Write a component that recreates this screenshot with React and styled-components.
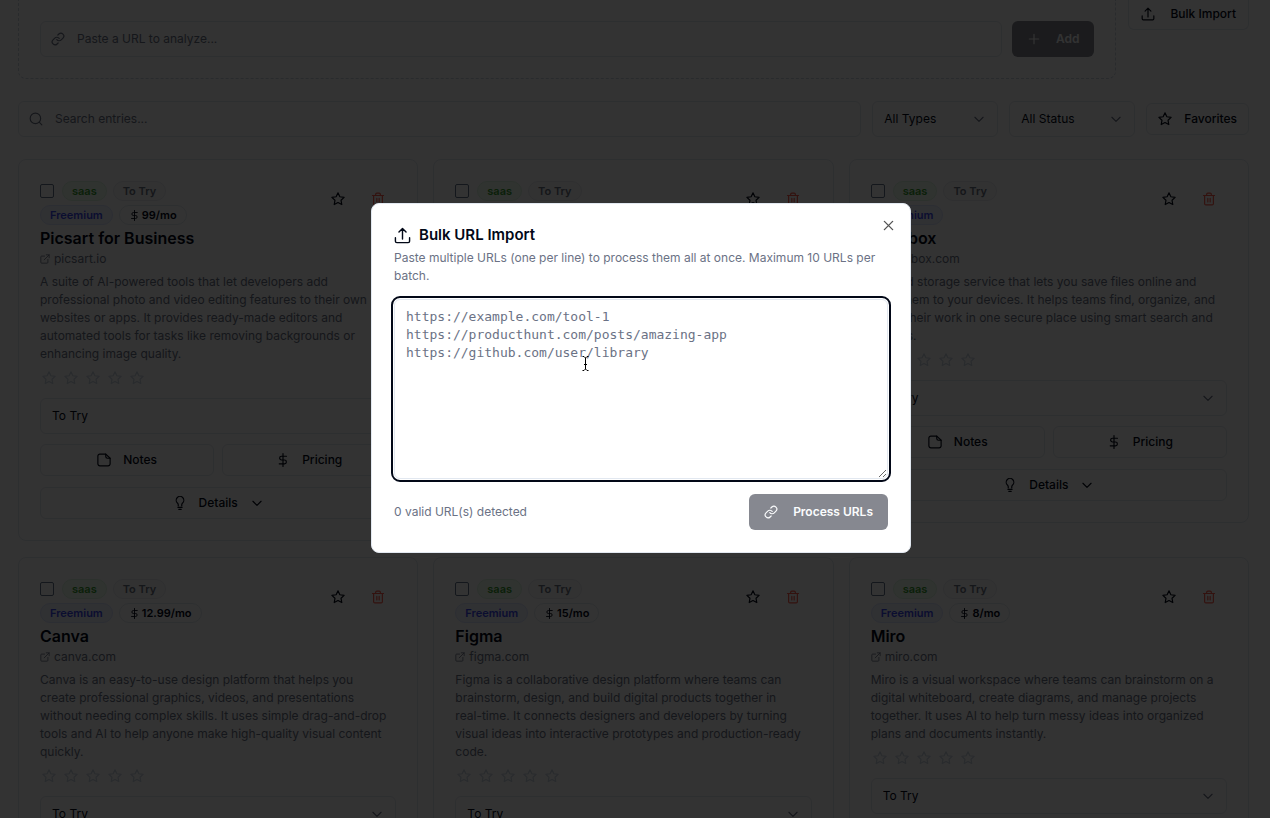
import React, { useState } from "react";
import styled, { createGlobalStyle } from "styled-components";

const entries = [
  {
    name: "Picsart for Business",
    site: "picsart.io",
    price: "99/mo",
    text: "A suite of AI-powered tools that let developers add\nprofessional photo and video editing features to their own\nwebsites or apps. It provides ready-made editors and\nautomated tools for tasks like removing backgrounds or\nenhancing image quality.",
  },
  {
    name: "Notion",
    site: "notion.so",
    price: "10/mo",
    text: "Notion is a connected workspace where teams can\nwrite, plan, and organize their work in one place.",
  },
  {
    name: "Dropbox",
    site: "dropbox.com",
    text: "A cloud storage service that lets you save files online and\nsync them to your devices. It helps teams find, organize, and\nshare their work in one secure place using smart search and\nAI tools.",
  },
  {
    name: "Canva",
    site: "canva.com",
    price: "12.99/mo",
    text: "Canva is an easy-to-use design platform that helps you\ncreate professional graphics, videos, and presentations\nwithout needing complex skills. It uses simple drag-and-drop\ntools and AI to help anyone make high-quality visual content\nquickly.",
  },
  {
    name: "Figma",
    site: "figma.com",
    price: "15/mo",
    text: "Figma is a collaborative design platform where teams can\nbrainstorm, design, and build digital products together in\nreal-time. It connects designers and developers by turning\nvisual ideas into interactive prototypes and production-ready\ncode.",
  },
  {
    name: "Miro",
    site: "miro.com",
    price: "8/mo",
    text: "Miro is a visual workspace where teams can brainstorm on a\ndigital whiteboard, create diagrams, and manage projects\ntogether. It uses AI to help turn messy ideas into organized\nplans and documents instantly.",
  },
];

const icons = {
  link: (
    <>
      <path d="M10 13a5 5 0 0 0 7.54.54l3-3a5 5 0 0 0-7.07-7.07l-1.72 1.71" />
      <path d="M14 11a5 5 0 0 0-7.54-.54l-3 3a5 5 0 0 0 7.07 7.07l1.71-1.71" />
    </>
  ),
  upload: (
    <>
      <path d="M2 15v5a2 2 0 0 0 2 2h16a2 2 0 0 0 2-2v-5" />
      <path d="M7 7l5-5 5 5M12 2v15" />
    </>
  ),
  plus: <path d="M4 12h16M12 4v16" />,
  search: (
    <>
      <circle cx="11" cy="11" r="9" />
      <path d="m22 22-4.5-4.5" />
    </>
  ),
  chevron: <path d="m5 9 7 7 7-7" />,
  star: (
    <path d="m12 1.500 3.200 6.600 7.300 1-5.300 5.100 1.300 7.300-6.500-3.500-6.500 3.500 1.300-7.300L1.500 9.100l7.300-1z" />
  ),
  trash: (
    <>
      <path d="M2.500 6h19M4.500 6v14a2 2 0 0 0 2 2h11a2 2 0 0 0 2-2V6" />
      <path d="M8 6V4a2 2 0 0 1 2-2h4a2 2 0 0 1 2 2v2M10 11v6M14 11v6" />
    </>
  ),
  external: (
    <>
      <path d="M19 13v7a2 2 0 0 1-2 2H4a2 2 0 0 1-2-2V7a2 2 0 0 1 2-2h7" />
      <path d="M15 2h7v7M10 14 22 2" />
    </>
  ),
  dollar: (
    <path d="M12 1v22M18 5.500H9.500a3.250 3.250 0 0 0 0 6.500h5a3.250 3.250 0 0 1 0 6.500H5.500" />
  ),
  note: (
    <>
      <path d="M15 2H5a3.500 3.500 0 0 0-3.500 3.500v13A3.500 3.500 0 0 0 5 22h14a3.500 3.500 0 0 0 3.500-3.500V9z" />
      <path d="M15 2v4a3 3 0 0 0 3 3h4.500" />
    </>
  ),
  bulb: (
    <>
      <path d="M9 17v-2c0-1.500-.9-2.300-1.600-3.300a6.500 6.500 0 1 1 9.200 0c-.7 1-1.600 1.800-1.600 3.300v2" />
      <path d="M8.500 19.500h7M10 23h4" />
    </>
  ),
  close: <path d="M3 3l18 18M21 3 3 21" />,
};

function Icon({ name, size = 14, stroke = 2 }) {
  return (
    <Svg
      width={size}
      height={size}
      viewBox="0 0 24 24"
      strokeWidth={stroke}
      aria-hidden="true"
    >
      {icons[name]}
    </Svg>
  );
}

function Dropdown({ label, options, wide }) {
  return (
    <SelectWrapper $wide={wide}>
      <select aria-label={label}>
        {options.map((option) => (
          <option key={option}>{option}</option>
        ))}
      </select>
      <Icon name="chevron" />
    </SelectWrapper>
  );
}

function EntryCard({ entry }) {
  return (
    <Card>
      <CardHeader>
        <Badges>
          <BadgeRow>
            <Checkbox type="checkbox" aria-label={`Select ${entry.name}`} />
            <Badge $kind="type">saas</Badge>
            <Badge $kind="status">To Try</Badge>
          </BadgeRow>
          <BadgeRow>
            <Badge $kind="plan">Freemium</Badge>
            {entry.price && (
              <Badge>
                <Icon name="dollar" size={11} />
                {entry.price}
              </Badge>
            )}
          </BadgeRow>
        </Badges>
        <IconButton aria-label="Favorite">
          <Icon name="star" />
        </IconButton>
        <IconButton aria-label="Delete" $danger>
          <Icon name="trash" />
        </IconButton>
      </CardHeader>
      <CardTitle>{entry.name}</CardTitle>
      <SiteLink href={`https://${entry.site}`}>
        <Icon name="external" size={10} />
        {entry.site}
      </SiteLink>
      <Description>{entry.text}</Description>
      <Rating>
        {[1, 2, 3, 4, 5].map((n) => (
          <RatingButton key={n} aria-label={`Rate ${n}`}>
            <Icon name="star" />
          </RatingButton>
        ))}
      </Rating>
      <Dropdown label="Status" options={["To Try", "Using", "Archived"]} wide />
      <CardActions>
        <Button>
          <Icon name="note" />
          Notes
        </Button>
        <Button>
          <Icon name="dollar" />
          Pricing
        </Button>
      </CardActions>
      <Button>
        <Icon name="bulb" />
        Details
        <Icon name="chevron" />
      </Button>
    </Card>
  );
}

function App() {
  const [urls, setUrls] = useState("");
  const count = urls
    .split("\n")
    .filter((line) => /^https?:\/\/\S+/.test(line.trim())).length;

  return (
    <>
      <GlobalStyle />
      <Page>
        <TopBar>
          <AddBox>
            <Field>
              <Icon name="link" />
              <input aria-label="URL" placeholder="Paste a URL to analyze..." />
            </Field>
            <PrimaryButton disabled>
              <Icon name="plus" />
              Add
            </PrimaryButton>
          </AddBox>
          <Button>
            <Icon name="upload" />
            Bulk Import
          </Button>
        </TopBar>

        <Filters>
          <Field>
            <Icon name="search" />
            <input aria-label="Search" placeholder="Search entries..." />
          </Field>
          <Dropdown label="Type" options={["All Types", "saas"]} />
          <Dropdown label="Filter status" options={["All Status", "To Try"]} />
          <Button>
            <Icon name="star" />
            Favorites
          </Button>
        </Filters>

        <Grid>
          {entries.map((entry) => (
            <EntryCard key={entry.name} entry={entry} />
          ))}
        </Grid>
      </Page>

      <Overlay>
        <Modal role="dialog" aria-modal="true" aria-labelledby="modal-title">
          <CloseButton aria-label="Close">
            <Icon name="close" size={11} stroke={3} />
          </CloseButton>
          <ModalTitle id="modal-title">
            <Icon name="upload" size={17} />
            Bulk URL Import
          </ModalTitle>
          <ModalText>
            Paste multiple URLs (one per line) to process them all at once.
            Maximum 10 URLs per batch.
          </ModalText>
          <UrlArea
            aria-label="URLs"
            value={urls}
            onChange={(e) => setUrls(e.target.value)}
            placeholder={
              "https://example.com/tool-1\nhttps://producthunt.com/posts/amazing-app\nhttps://github.com/user/library"
            }
          />
          <ModalFooter>
            <span>{count} valid URL(s) detected</span>
            <PrimaryButton disabled={count === 0}>
              <Icon name="link" />
              Process URLs
            </PrimaryButton>
          </ModalFooter>
          <Cursor width="7" height="15" viewBox="0 0 7 15" aria-hidden="true">
            <path d="M0.500 0.500h1.500l1.500 1.500 1.500-1.500h1.500M3.500 2v11M2 8.500h3M0.500 14.500h1.500l1.500-1.500 1.500 1.500h1.500" />
          </Cursor>
        </Modal>
      </Overlay>
    </>
  );
}

export default App;

const GlobalStyle = createGlobalStyle`
  * {
    box-sizing: border-box;
  }
  body {
    margin: 0;
    background: #fff;
    color: #020817;
    font-family: Inter, "Liberation Sans", sans-serif;
    font-size: 12px;
    line-height: 18px;
  }
  button, input, select, textarea {
    font: inherit;
    color: inherit;
  }
`;

const Svg = styled.svg`
  flex: none;
  fill: none;
  stroke: currentColor;
  stroke-linecap: round;
  stroke-linejoin: round;
`;

const Page = styled.main`
  height: 100vh;
  overflow: hidden;
  padding: 0 21px 0 18px;
`;

// botões
const Button = styled.button`
  display: flex;
  align-items: center;
  justify-content: center;
  gap: 12px;
  height: 32px;
  padding: 0 11px;
  border: 1px solid #e2e8f0;
  border-radius: 6px;
  background: #fff;
  font-weight: 500;
`;
const PrimaryButton = styled(Button)`
  gap: 15px;
  height: 36px;
  padding: 0 15px;
  border: 0;
  background: #0f1424;
  color: #f8fafc;
  font-weight: 600;

  &:disabled {
    opacity: 0.5;
  }
`;
const IconButton = styled.button`
  display: grid;
  place-items: center;
  width: 37px;
  height: 36px;
  padding: 0;
  border: 0;
  background: none;
  color: ${({ $danger }) => ($danger ? "#ff5a4a" : "inherit")};
`;

// topo
const TopBar = styled.div`
  display: flex;
  align-items: flex-start;
  gap: 12px;

  > ${Button} {
    gap: 15px;
    height: 30px;
    padding: 0 12px 2px;
    border-top: 0;
    border-radius: 0 0 6px 6px;
  }
`;
const AddBox = styled.div`
  flex: 1;
  display: flex;
  gap: 10px;
  padding: 21px;
  border: 1px dashed #cbd5e1;
  border-top: 0;
  border-radius: 0 0 8px 8px;
`;
const Field = styled.label`
  flex: 1;
  display: flex;
  align-items: center;
  gap: 12px;
  height: 36px;
  padding: 0 10px;
  border: 1px solid #e2e8f0;
  border-radius: 6px;
  color: #6b7285;

  input {
    flex: 1;
    min-width: 0;
    padding: 0;
    border: 0;
    outline: 0;
    background: none;
  }
  input::placeholder {
    color: #6b7285;
    opacity: 1;
  }
`;

// Filtros
const Filters = styled.div`
  display: flex;
  align-items: center;
  gap: 11px;
  margin: 22px 0;
`;
const SelectWrapper = styled.div`
  display: grid;
  align-items: center;
  width: ${({ $wide }) => ($wide ? "100%" : "126px")};

  select,
  svg {
    grid-area: 1 / 1;
  }
  select {
    appearance: none;
    width: 100%;
    height: 36px;
    padding: 0 11px;
    border: 1px solid #e2e8f0;
    border-radius: 6px;
    background: #fff;
  }
  svg {
    justify-self: end;
    margin-right: 12px;
    color: #6b7285;
    pointer-events: none;
  }
`;

// cards
const Grid = styled.section`
  display: grid;
  grid-template-columns: repeat(3, minmax(0, 1fr));
  align-items: start;
  gap: 16px 15px;
`;
const Card = styled.article`
  display: flex;
  flex-direction: column;
  padding: 21px;
  border: 1px solid #e2e8f0;
  border-radius: 8px;
`;
const CardHeader = styled.div`
  display: flex;
  gap: 3px;
`;
const Badges = styled.div`
  flex: 1;
`;
const BadgeRow = styled.div`
  display: flex;
  align-items: center;
  gap: 6px;
  margin-bottom: 4px;
`;
const badgeColors = {
  type: ["#f0fdf0", "#dcf5e0", "#3aa030"],
  status: ["#fafafa", "#e8ebf0", "#6b7280"],
  plan: ["#eff3ff", "#dbe4fe", "#3b48f0"],
  price: ["#fff", "#e2e8f0", "#020817"],
};
const Badge = styled.span`
  display: inline-flex;
  align-items: center;
  gap: 2px;
  height: 20px;
  padding: 0 9px;
  border-radius: 10px;
  font-size: 11px;
  font-weight: 600;
  background: ${({ $kind = "price" }) => badgeColors[$kind][0]};
  border: 1px solid ${({ $kind = "price" }) => badgeColors[$kind][1]};
  color: ${({ $kind = "price" }) => badgeColors[$kind][2]};
`;
const Checkbox = styled.input`
  appearance: none;
  width: 14px;
  height: 14px;
  margin: 0 2px 0 0;
  border: 1px solid #64748b;
  border-radius: 2px;
`;
const CardTitle = styled.h3`
  margin: 0;
  font-size: 16px;
  font-weight: 600;
  line-height: 18px;
`;
const SiteLink = styled.a`
  display: flex;
  align-items: center;
  gap: 4px;
  margin: 3px 0 5px;
  color: #6b7285;
  text-decoration: none;
`;
const Description = styled.p`
  margin: 0;
  color: #6b7285;
  white-space: pre-line;
`;
const Rating = styled.div`
  display: flex;
  gap: 4px;
  margin: 4px 0 9px;
`;
const RatingButton = styled.button`
  display: grid;
  place-items: center;
  width: 18px;
  height: 22px;
  padding: 0;
  border: 0;
  background: none;
  color: #cbd5e1;
`;
const CardActions = styled.div`
  display: grid;
  grid-template-columns: 1fr 1fr;
  gap: 8px;
  margin: 10px 0 11px;
`;

// modal
const Overlay = styled.div`
  position: fixed;
  inset: 0;
  display: grid;
  place-items: center;
  padding: 0 0 62px 12px;
  background: rgba(0, 0, 0, 0.8);
`;
const Modal = styled.div`
  position: relative;
  width: 540px;
  padding: 22px;
  border: 1px solid #e2e8f0;
  border-radius: 8px;
  background: #fff;
`;
const CloseButton = styled.button`
  position: absolute;
  top: 13px;
  right: 14px;
  display: grid;
  place-items: center;
  width: 16px;
  height: 16px;
  padding: 0;
  border: 0;
  background: none;
  color: #555;
`;
const ModalTitle = styled.h2`
  display: flex;
  align-items: center;
  gap: 8px;
  margin: 0 0 5px;
  font-size: 15px;
  font-weight: 600;
  line-height: 18px;
`;
const ModalText = styled.p`
  margin: 0 0 14px;
  color: #6b7285;
`;
const UrlArea = styled.textarea`
  display: block;
  width: 100%;
  height: 180px;
  padding: 8px 11px;
  border: 1px solid #e2e8f0;
  border-radius: 6px;
  outline: 2px solid #020817;
  outline-offset: 1px;
  background: #fff;
  font-family: "DejaVu Sans Mono", "Liberation Mono", monospace;
  font-size: 13px;
  resize: vertical;

  &::placeholder {
    color: #6b7285;
    opacity: 1;
  }
`;
const ModalFooter = styled.div`
  display: flex;
  align-items: center;
  justify-content: space-between;
  margin-top: 15px;
  color: #6b7285;
`;
const Cursor = styled.svg`
  position: absolute;
  top: 152px;
  left: 210px;
  fill: none;
  stroke: #000;
  pointer-events: none;
`;
